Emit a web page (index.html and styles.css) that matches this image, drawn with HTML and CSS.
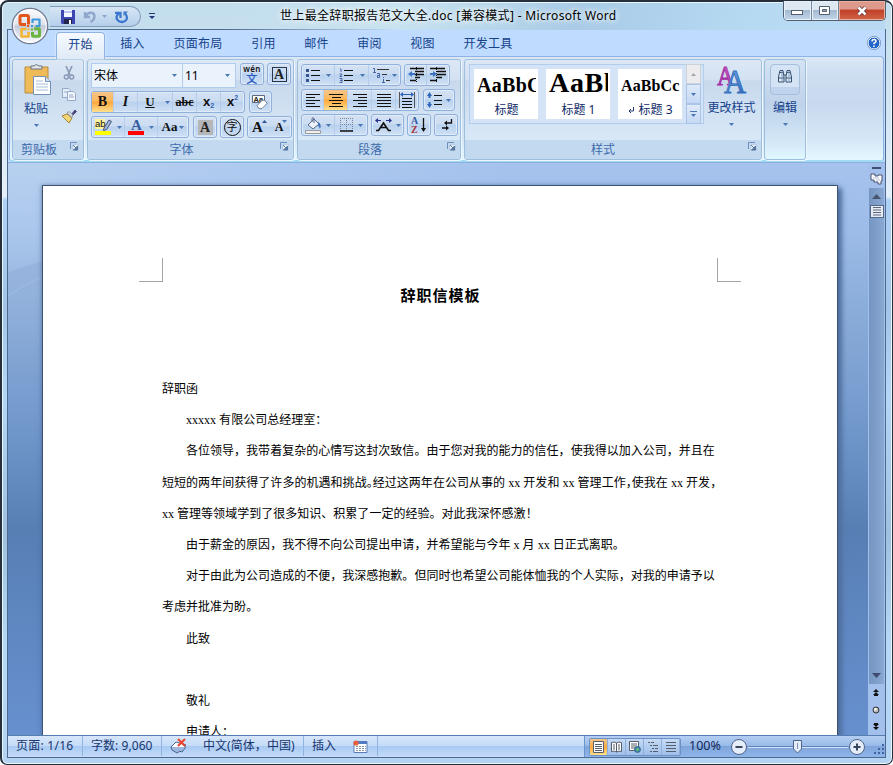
FILE: index.html
```html
<!DOCTYPE html>
<html lang="zh-CN">
<head>
<meta charset="utf-8">
<title>世上最全辞职报告范文大全.doc [兼容模式] - Microsoft Word</title>
<link rel="stylesheet" href="styles.css">
</head>
<body>
<svg class="defs" width="0" height="0">
  <defs>
    <symbol id="car" viewBox="0 0 5 3"><path d="M0 0h5L2.500 3z" fill="#4a78b5"/></symbol>
    <symbol id="launch" viewBox="0 0 9 9"><path d="M.5 7V.5H7" fill="none" stroke="#6b8fbd"/><path d="M3 3h5.500v5.500H3z" fill="#fff" stroke="#9db8d8" stroke-width=".6"/><path d="M3 3l3 3M7.500 4v4h-4z" stroke="#52779f" fill="#52779f"/></symbol>
    <linearGradient id="blu" x1="0" y1="0" x2="1" y2="1"><stop stop-color="#8fc0f5"/><stop offset="1" stop-color="#2457a8"/></linearGradient>
    <linearGradient id="pur" x1="0" y1="0" x2="0" y2="1"><stop stop-color="#e178cd"/><stop offset="1" stop-color="#98279c"/></linearGradient>
    <linearGradient id="orb" x1="0" y1="0" x2="0" y2="1"><stop stop-color="#fdfdff"/><stop offset=".45" stop-color="#dfe3ec"/><stop offset=".5" stop-color="#c3cad8"/><stop offset=".8" stop-color="#e3e8f2"/><stop offset="1" stop-color="#fff"/></linearGradient>
    <linearGradient id="wave" x1="0" y1="0" x2="0" y2="1"><stop stop-color="#8fadd8" stop-opacity=".9"/><stop offset="1" stop-color="#8fadd8" stop-opacity="0"/></linearGradient>
  </defs>
</svg>
<div class="window">
  <header class="titlebar">
    <div class="quick">
      <svg width="16" height="16" viewBox="0 0 16 16"><path d="M1 1h14v14H2l-1-1z" fill="#3d46b0"/><path d="M4 1h8v7H4z" fill="#f5f7ff"/><path d="M4 2h8v2H4z" fill="#b9c5f0"/><path d="M4 10h8v5H4z" fill="#20264e"/><path d="M9 11h2v4H9z" fill="#fff"/></svg>
      <svg width="14" height="14" viewBox="0 0 14 14"><path d="M2 2v5h5M2.500 6.500C5 1.500 11 1.500 11.500 6c0 3-2 5-4 6" fill="none" stroke="#8fa7ca" stroke-width="2.400"/></svg>
      <svg class="qcar" width="5" height="3"><use href="#car" opacity=".5"/></svg>
      <svg width="14" height="14" viewBox="0 0 14 14"><path d="M4.500 3.500C1 5 1 8 2.500 10c2.500 3 7.500 2.500 9-.5 1-2.500 0-4.500-1.500-6M0 2.800h5.500V8" fill="none" stroke="#3d78d0" stroke-width="2.300"/><path d="M8.500 6V1.500H13z" fill="#3d78d0"/></svg>
    </div>
    <svg class="qmore" width="6" height="7" viewBox="0 0 6 7"><path d="M0 .5h6" stroke="#1f3f74"/><path d="M0 3h6L3 6z" fill="#1f3f74"/></svg>
    <h1>世上最全辞职报告范文大全.doc [兼容模式] - Microsoft Word</h1>
    <div class="wbtns">
      <span class="wb"><svg width="13" height="6"><rect x=".5" y=".5" width="11" height="4" fill="#fff" stroke="#53606f"/></svg></span>
      <span class="wb"><svg width="12" height="10"><path d="M.5.5h10v8H.5z" fill="#fff" stroke="#53606f"/><path d="M3.500 3.500h4v2h-4z" fill="#9aabc0" stroke="#53606f"/></svg></span>
      <span class="wb close"><svg width="12" height="10" viewBox="0 0 12 10"><path d="M2.500 1.500l7 7M9.500 1.500l-7 7" stroke="#5a3038" stroke-width="4"/><path d="M2.500 1.500l7 7M9.500 1.500l-7 7" stroke="#fff" stroke-width="2.500"/></svg></span>
    </div>
  </header>
  <div class="orb">
    <svg width="38" height="38" viewBox="0 0 38 38"><circle cx="19" cy="19" r="17.700" fill="url(#orb)" stroke="#737c93" stroke-width="1.300"/><circle cx="19" cy="19" r="16.200" fill="none" stroke="#fff" stroke-opacity=".8" stroke-width="1.200"/><g fill="none" stroke-width="3" stroke-linejoin="round"><path d="M17.500 17.500V10q0-1.500-1.500-1.500H10.500q-1.500 0-1.500 1.500v6q0 1.500 1.500 1.500h4.500" stroke="#e2561a"/><path d="M21.500 16v-3.500h7V19h-4" stroke="#3d99d9" stroke-width="2.200"/><path d="M15.500 22H10.500v7.500h7V25" stroke="#f4b632" stroke-width="2.600"/><path d="M23 21.800h4.500q1 0 1 1v5.500q0 1-1 1h-5q-1 0-1-1V25" stroke="#6db33f"/></g><path d="M16 18h2v2h-2z" fill="#e75a18"/><path d="M20 18h2v2h-2z" fill="#3d99d9"/><path d="M16.500 21.500h2v2h-2z" fill="#f4b632"/><path d="M20 21.500h2v2h-2z" fill="#6db33f"/></svg>
  </div>
  <div class="client">
    <nav class="tabs">
      <span class="tab on">开始</span><span class="tab">插入</span><span class="tab wide">页面布局</span><span class="tab">引用</span><span class="tab">邮件</span><span class="tab">审阅</span><span class="tab">视图</span><span class="tab wide">开发工具</span>
      <svg class="help" width="14" height="14" viewBox="0 0 14 14"><circle cx="7" cy="7" r="6" fill="#2364c8" stroke="#fff"/><circle cx="7" cy="7" r="6.700" fill="none" stroke="#4d73a8" stroke-width=".6"/><path d="M5 5.500Q5 3.500 7 3.500t2 1.800Q9 6.500 7 7.300v1M7 9.500v1.500" fill="none" stroke="#fff" stroke-width="1.500"/></svg>
    </nav>
    <div class="ribbon">
      <section class="group clip">
        <div class="gbody">
          <div class="paste">
            <svg width="28" height="32" viewBox="0 0 28 32"><path d="M1 3h23v26H1z" fill="#efba58" stroke="#b98b3c"/><path d="M7 5V2h3q2-3 5 0h3v3z" fill="#e3e7ec" stroke="#68717d"/><path d="M9.500 12.500h12l5 5v13h-17z" fill="#fff" stroke="#7590b8"/><path d="M21.500 12.500v5h5" fill="#cfdef3" stroke="#7590b8"/><path d="M12 17h7M12 20h12M12 23h12M12 26h12" stroke="#a8bedc"/></svg>
            <span>粘贴</span><svg width="5" height="3"><use href="#car"/></svg>
          </div>
          <div class="mini">
            <svg width="12" height="14" viewBox="0 0 12 14"><path d="M3 0l4 9M9 0L5 9" stroke="#8797b4" stroke-width="1.600"/><circle cx="3.300" cy="11" r="2" fill="none" stroke="#8797b4" stroke-width="1.400"/><circle cx="8.700" cy="11" r="2" fill="none" stroke="#8797b4" stroke-width="1.400"/></svg>
            <svg width="16" height="13" viewBox="0 0 16 13"><path d="M1.500.5h6l2 2v7h-8z" fill="#e7effa" stroke="#94a9ca"/><path d="M6.500 3.500h6l2 2v7h-8z" fill="#f3f7fd" stroke="#94a9ca"/><path d="M3 4h3M8 7h4M8 9h5" stroke="#94a9ca"/></svg>
            <svg width="16" height="15" viewBox="0 0 16 15"><path d="M10 6l4-5 1.500 1.500L11 7z" fill="#504980" stroke="#504980"/><path d="M1 7l5-2 5 4-3 5z" fill="#f3d677" stroke="#a58432"/><path d="M6 4l2-1.500L12 6l-1 2.500z" fill="#dadde8" stroke="#777e90" stroke-width=".7"/></svg>
          </div>
        </div>
        <footer>剪贴板<svg class="launch" width="9" height="9"><use href="#launch"/></svg></footer>
      </section>

      <section class="group font">
        <div class="gbody rows">
          <div class="row r1">
            <div class="combo"><span class="c1">宋体<svg width="5" height="3"><use href="#car"/></svg></span><span class="c2">11<svg width="5" height="3"><use href="#car"/></svg></span></div>
            <div class="box w24 m4"><span class="pin"><i>wén</i><b>文</b></span></div>
            <div class="box w24 m3"><span class="framed">A</span></div>
          </div>
          <div class="row">
            <div class="box">
              <span class="b w22 hot serif bold">B</span><span class="b w24 serif ital">I</span><span class="b w24 serif bold under">U</span><span class="b w11"><svg width="5" height="3"><use href="#car"/></svg></span><span class="b w24 serif strike">abc</span><span class="b w24 sx">x<sub>2</sub></span><span class="b w23 sx">x<sup>2</sup></span>
            </div>
            <div class="box w23 m4"><svg width="17" height="17" viewBox="0 0 17 17"><path d="M.5 1.500h12v7H.5z" fill="#fff" stroke="#5c6c86"/><text x="1.500" y="8" font-family="Liberation Sans" font-size="7.500" font-weight="bold" fill="#222">Aa</text><path d="M5 11.500l5-5q2-1 4 1l1 2-5 5q-2 1-4-1z" fill="#fff" stroke="#70819c"/></svg></div>
          </div>
          <div class="row">
            <div class="box">
              <span class="b w33"><svg width="18" height="18" viewBox="0 0 18 18"><path d="M0 1h10v10H0z" fill="#fbf49a"/><text x="0" y="9" font-family="Liberation Sans" font-size="9.500" fill="#111">ab</text><path d="M9 10l5-8 2.500 1.500-5 8-3 1z" fill="#a4b8d8" stroke="#40557d"/><path d="M0 13h16v4H0z" fill="#ff0"/></svg><svg width="5" height="3"><use href="#car"/></svg></span>
              <span class="b w33"><svg width="17" height="18" viewBox="0 0 17 18"><text x="3" y="12" font-family="Liberation Serif" font-size="15" font-weight="bold" fill="#365f9f">A</text><path d="M0 13h16v4H0z" fill="red"/></svg><svg width="5" height="3"><use href="#car"/></svg></span>
              <span class="b w30 serif bold aa">Aa<svg width="5" height="3"><use href="#car"/></svg></span>
            </div>
            <div class="box w24 m4"><span class="shade">A</span></div>
            <div class="box w24 m3"><span class="ring">字</span></div>
            <div class="box m3"><span class="b w23 serif bold grow">A<svg width="5" height="3" viewBox="0 0 5 3"><path d="M0 3h5L2.500 0z" fill="#2c5599"/></svg></span><span class="b w21 serif bold grow small">A<svg width="5" height="3"><use href="#car"/></svg></span></div>
          </div>
        </div>
        <footer>字体<svg class="launch" width="9" height="9"><use href="#launch"/></svg></footer>
      </section>

      <section class="group para">
        <div class="gbody rows">
          <div class="row">
            <div class="box">
              <span class="b w33"><svg width="14" height="14" viewBox="0 0 14 14"><path d="M5 2.500h9M5 7.500h9M5 12.500h9" stroke="#111"/><path d="M0 1h3v3H0zM0 6h3v3H0zM0 11h3v3H0z" fill="#38558f"/></svg><svg width="5" height="3"><use href="#car"/></svg></span>
              <span class="b w34"><svg width="15" height="15" viewBox="0 0 15 15"><path d="M5 2.500h9M5 7.500h9M5 12.500h9" stroke="#111"/><path d="M1 1h1v3M.5 6H3L1 8.500h2M.5 10.500H3v4H.500M1 12.500h2" fill="none" stroke="#4565a5"/></svg><svg width="5" height="3"><use href="#car"/></svg></span>
              <span class="b w31 tight"><svg width="17" height="16" viewBox="0 0 17 16"><path d="M4 2.500h12M9 7.500h5M13 13.500h4" stroke="#333"/><path d="M0 1.500h1.500V5M0 5.500h3M4 6.500h2.500v4H4.500v-2h2M10.500 12v4M10.500 10v1M9 15.500h3" fill="none" stroke="#4565a5"/></svg><svg width="5" height="3"><use href="#car"/></svg></span>
            </div>
            <div class="box m3"><span class="b w22"><svg width="16" height="16" viewBox="0 0 16 16"><path d="M2 1.500h14M7 4.500h9M7 7.500h9M7 10.500h5M2 13.500h6" stroke="#111" stroke-width="1.300"/><path d="M8.500 0v16" stroke="#111" stroke-dasharray="1 1"/><path d="M0 7l4-3v2h3v2H4v2z" fill="#3e74c5"/></svg></span><span class="b w22"><svg width="16" height="16" viewBox="0 0 16 16"><path d="M0 1.500h15M7 4.500h9M7 7.500h9M7 10.500h5M0 13.500h7" stroke="#111" stroke-width="1.300"/><path d="M6.500 0v16" stroke="#111" stroke-dasharray="1 1"/><path d="M7 7L3 4v2H0v2h3v2z" fill="#3e74c5"/></svg></span></div>
          </div>
          <div class="row">
            <div class="box">
              <span class="b w22"><svg width="14" height="13"><path d="M0 .5h14M0 3.500h9M0 6.500h14M0 9.500h9M0 12.500h14" stroke="#111"/></svg></span>
              <span class="b w24 hot"><svg width="14" height="13"><path d="M0 .5h14M3 3.500h9M0 6.500h14M3 9.500h9M0 12.500h14" stroke="#111"/></svg></span>
              <span class="b w24"><svg width="14" height="13"><path d="M0 .5h14M5 3.500h9M0 6.500h14M5 9.500h9M0 12.500h14" stroke="#111"/></svg></span>
              <span class="b w24"><svg width="14" height="13"><path d="M0 .5h14M0 3.500h14M0 6.500h14M0 9.500h14M0 12.500h14" stroke="#111"/></svg></span>
              <span class="b w22"><svg width="16" height="16" viewBox="0 0 16 16"><path d="M.5 0v16M15.500 0v16" stroke="#555"/><path d="M3 6.500h10M3 9.500h10M3 12.500h10M3 15.500h10" stroke="#111"/><path d="M1 2.500l3-2.500v2h8V0l3 2.500L12 5V3H4v2z" fill="#2d64b8"/></svg></span>
            </div>
            <div class="box m4"><span class="b w30"><svg width="15" height="16" viewBox="0 0 15 16"><path d="M7 3.500h8M7 8.500h8M7 12.500h8" stroke="#111"/><path d="M2.500 0L5 4H3.500v2h-2V4H0zM2.500 16L5 12H3.500v-2h-2v2H0z" fill="#2d64b8"/></svg><svg width="5" height="3"><use href="#car"/></svg></span></div>
          </div>
          <div class="row">
            <div class="box">
              <span class="b w33"><svg width="17" height="17" viewBox="0 0 17 17"><path d="M3 8l6-6 5 5-6 5z" fill="#eef2fa" stroke="#59698a"/><path d="M7 5V1.500q1.500-2 2 0V6" fill="none" stroke="#59698a"/><path d="M13 5q4 2 2 7l-2-4z" fill="#3d6db8"/><path d="M.5 13.500h15v3H.500z" fill="#eee" stroke="#9b9b9b"/></svg><svg width="5" height="3"><use href="#car"/></svg></span>
              <span class="b w32"><svg width="14" height="14" viewBox="0 0 14 14"><path d="M.5 0v13M6.500 0v13M12.500 0v13M0 .5h13M0 6.500h13" stroke="#7084a0" stroke-dasharray="1 1"/><path d="M0 13h13" stroke="#111" stroke-width="1.500"/></svg><svg width="5" height="3"><use href="#car"/></svg></span>
            </div>
            <div class="box m3"><span class="b w31"><svg width="17" height="14" viewBox="0 0 17 14"><path d="M1 12.500h2.500L8.500 5l5 7.500H16M5.500 9.500h6" fill="none" stroke="#111" stroke-width="1.600"/><path d="M0 2.500L3 0v5zM17 2.500L14 0v5zM3 2h3v1H3zM11 2h3v1h-3z" fill="#25348f"/></svg><svg width="5" height="3"><use href="#car"/></svg></span></div>
            <div class="box w24 m2"><svg width="16" height="18" viewBox="0 0 16 18"><text x="0" y="8" font-family="Liberation Serif" font-size="10" font-weight="bold" fill="#315da8">A</text><text x="0" y="17" font-family="Liberation Serif" font-size="10" font-weight="bold" fill="#a3343c">Z</text><path d="M12.500 2v11" stroke="#111" stroke-width="1.300"/><path d="M10 12h5l-2.500 4z" fill="#111"/></svg></div>
            <div class="box w24 m2"><svg width="13" height="14" viewBox="0 0 13 14"><path d="M11.500 1v4H6M2 10h5" fill="none" stroke="#111" stroke-width="1.300"/><path d="M4 5l3-2.500v5zM9 10L6 7.500v5z" fill="#111"/></svg></div>
          </div>
        </div>
        <footer>段落<svg class="launch" width="9" height="9"><use href="#launch"/></svg></footer>
      </section>

      <section class="group styles">
        <div class="gbody">
          <div class="gallery">
            <div class="card"><div class="prev p1">AaBbC</div><span>标题</span></div>
            <div class="card"><div class="prev p2">AaBb</div><span>标题 1</span></div>
            <div class="card"><div class="prev p3">AaBbCc</div><span><svg width="6" height="7" viewBox="0 0 6 7"><path d="M5.500 0v4H1M3 2L1 4l2 2" fill="none" stroke="#0f2a66" stroke-width=".9"/></svg> 标题 3</span></div>
            <div class="spin"><i><svg width="5" height="3" viewBox="0 0 5 3"><path d="M0 3h5L2.500 0z" fill="#a5a5a5"/></svg></i><i><svg width="5" height="3"><use href="#car"/></svg></i><i><svg width="7" height="7" viewBox="0 0 7 7"><path d="M0 .5h7" stroke="#4a78b5"/><path d="M1 3h5L3.500 6z" fill="#4a78b5"/></svg></i></div>
          </div>
          <div class="change">
            <svg width="30" height="30" viewBox="0 0 30 30"><text x="0" y="20" font-family="Liberation Serif" font-size="27" textLength="17" lengthAdjust="spacingAndGlyphs" fill="url(#pur)" stroke="#a12ca6" stroke-width=".9">A</text><text x="7" y="28" font-family="Liberation Serif" font-size="33" textLength="22" lengthAdjust="spacingAndGlyphs" fill="url(#blu)" stroke="#2f6fc0" stroke-width=".9">A</text></svg>
            <span>更改样式</span><svg width="5" height="3"><use href="#car"/></svg>
          </div>
        </div>
        <footer>样式<svg class="launch" width="9" height="9"><use href="#launch"/></svg></footer>
      </section>

      <section class="group edit">
        <div class="find"><svg width="16" height="14" viewBox="0 0 16 14"><path d="M1.500 8L3 1.500h3L7 8v5H1.500zM9 8l1-6.500h3L14.500 8v5H9z" fill="#e4ebf6" stroke="#34506f"/><path d="M3 3.500h3M10 3.500h3M7 6h2M1.500 9H7M9 9h5.500" stroke="#34506f"/><path d="M5 2v11M12 2v11" stroke="#7d9cc4"/></svg></div>
        <span>编辑</span><svg width="5" height="3"><use href="#car"/></svg>
      </section>
    </div>

    <div class="work">
      <div class="desk">
        <svg class="wave" width="60" height="130" viewBox="0 0 60 130"><path d="M0 19L60 0v130H0z" fill="url(#wave)"/><path d="M0 43Q25 25 60 15" fill="none" stroke="#b0c9ea" stroke-opacity=".6"/></svg>
        <article class="page">
          <div class="corners"><i class="cl"></i><i class="cr"></i></div>
          <h2>辞职信模板</h2>
          <p>辞职函</p>
          <p class="ind">xxxxx 有限公司总经理室：</p>
          <p class="ind">各位领导，我带着复杂的心情写这封次致信。由于您对我的能力的信任，使我得以加入公司，并且在</p>
          <p class="over">短短的两年间获得了许多的机遇和挑战<span class="half">。</span>经过这两年在公司从事的 xx 开发和 xx 管理工作<span class="half">，</span>使我在 xx 开发，</p>
          <p>xx 管理等领域学到了很多知识、积累了一定的经验。对此我深怀感激！</p>
          <p class="ind">由于薪金的原因，我不得不向公司提出申请，并希望能与今年 x 月 xx 日正式离职。</p>
          <p class="ind">对于由此为公司造成的不便，我深感抱歉。但同时也希望公司能体恤我的个人实际，对我的申请予以</p>
          <p>考虑并批准为盼。</p>
          <p class="ind">此致</p>
          <p></p>
          <p class="ind">敬礼</p>
          <p class="ind">申请人：</p>
        </article>
      </div>
      <aside class="scroll">
        <div class="split"></div>
        <svg class="ruler" width="13" height="12" viewBox="0 0 13 12"><path d="M1 1h4v2h3V2h4v6h-1v3H8V9H4V7H1z" fill="#fff" stroke="#47536e"/><path d="M3 5h6M6 7h4" stroke="#b7c3d8"/></svg>
        <div class="track">
          <svg width="9" height="5"><path d="M0 5h9L4.500 0z" fill="#48546d"/></svg>
          <div class="thumb"><svg width="8" height="9"><path d="M0 .5h8M0 3h8M0 5.500h8M0 8h8" stroke="#5c6a81"/></svg></div>
          <svg class="down" width="9" height="5"><path d="M0 0h9L4.500 5z" fill="#3f4b70"/></svg>
        </div>
        <div class="nav">
          <svg width="6" height="7" viewBox="0 0 6 7"><path d="M0 3l3-3 3 3zM0 6l3-3 3 3zM1 6h4v1H1z" fill="#111"/></svg>
          <svg width="8" height="8"><circle cx="4" cy="4" r="3" fill="#bbb" stroke="#333"/><circle cx="3.300" cy="3.300" r="1.200" fill="#fff"/></svg>
          <svg width="6" height="7" viewBox="0 0 6 7"><path d="M0 4l3 3 3-3zM0 1l3 3 3-3zM1 0h4v1H1z" fill="#111"/></svg>
        </div>
      </aside>
    </div>

    <div class="status">
      <span class="s s1">页面: 1/16</span><span class="s s2">字数: 9,060</span>
      <span class="s0"><svg width="18" height="16" viewBox="0 0 18 16"><path d="M1 9l5-5 10 3-5 6q-2-2-4 1z" fill="#fff" stroke="#4b6593"/><path d="M1 9l1 3 5 3q3-3 5-1l4-5" fill="#9fb8df" stroke="#4b6593"/><path d="M8 1l7 7M15 1L8 8" stroke="#e8442d" stroke-width="2"/></svg></span>
      <span class="s s3">中文(简体，中国)</span><span class="s s4">插入</span>
      <span class="s s5"><svg width="15" height="13" viewBox="0 0 15 13"><path d="M1 1.500h13v11H1z" fill="#fff" stroke="#5b7db5"/><path d="M1 1h13v3H1z" fill="#507bc3"/><path d="M3 6.500h10M3 8.500h10M3 10.500h10" stroke="#8494aa" stroke-dasharray="2 1"/><circle cx="3" cy="3" r="2.600" fill="#e6603c"/></svg></span>
      <div class="right">
        <div class="views">
          <span class="v hot"><svg width="12" height="12"><path d="M.5.5h10v11H.5z" fill="#fff" stroke="#565e6c"/><path d="M2 3.500h7M2 5.500h7M2 7.500h7M2 9.500h7" stroke="#565e6c"/></svg></span>
          <span class="v"><svg width="12" height="12"><path d="M.5 1.500q3-1 5 .5v9q-2-1.500-5-.5zM10.500 1.500q-3-1-5 .5v9q2-1.500 5-.5z" fill="#fff" stroke="#565e6c"/><path d="M2 4h2M2 6h2M2 8h2M7 4h2M7 6h2M7 8h2" stroke="#565e6c"/></svg></span>
          <span class="v"><svg width="12" height="12"><path d="M.5.5h9v9h-9z" fill="#fff" stroke="#565e6c"/><path d="M2 3h6M2 5h6M2 7h4" stroke="#565e6c"/><circle cx="8.500" cy="8.500" r="3" fill="#3a88b0" stroke="#28577f" stroke-width=".7"/><path d="M7 8l2-1 1 2-2 1z" fill="#7cc35b"/></svg></span>
          <span class="v"><svg width="10" height="10"><path d="M0 .5h6M2 3.500h8M4 6.500h6M2 9.500h8" stroke="#565e6c" stroke-dasharray="2 1 6"/></svg></span>
          <span class="v"><svg width="10" height="10"><path d="M0 .5h10M0 3.500h10M0 6.500h10M0 9.500h10" stroke="#565e6c"/></svg></span>
        </div>
        <span class="pct">100%</span>
        <svg class="zoom" width="136" height="18" viewBox="0 0 136 18"><g stroke="#4e6389"><circle cx="9" cy="9" r="7.500" fill="#e5edfa"/><circle cx="127" cy="9" r="7.500" fill="#e5edfa"/></g><path d="M5.500 9h7M123.500 9h7M127 5.500v7" stroke="#39465c" stroke-width="2"/><path d="M18 9.500h100" stroke="#d4e2f8"/><path d="M18 8.500h100" stroke="#5f83ba"/><path d="M63.500 2.500h8V11l-4 4-4-4z" fill="#e6eefb" stroke="#4e6389"/><path d="M67.500 5v6" stroke="#8295b5"/></svg>
        <svg class="grip" width="12" height="12"><path d="M9 1h2v2H9zM5 5h2v2H5zM9 5h2v2H9zM1 9h2v2H1zM5 9h2v2H5zM9 9h2v2H9z" fill="#41639f"/></svg>
      </div>
    </div>
  </div>
</div>
</body>
</html>
```
FILE: styles.css
```css
* { box-sizing: border-box; }
body { margin: 0; background: #fff; overflow: hidden; font: 12px/16px "Noto Sans", "Noto Sans CJK SC", sans-serif; color: #15428b; }
svg { display: block; flex: none; }
i { font-style: normal; }
.defs { position: absolute; }
.window { position: relative; width: 893px; height: 765px; border: 1px solid #26303c; border-width: 2px 1px 1px 2px; border-radius: 8px 8px 7px 7px; background: linear-gradient(#c2ddec 0, #d3e5f4 15%, #e4f0fb 25.500%, #aed2f6 26%, #a3c4e6 40%, #b4d6f7 52%, #9fc0df 70%, #b7d9f8 85%, #b4d3f2 100%); box-shadow: inset 0 0 0 1px #e9f6ff; padding: 0 7px 7px 5px; display: flex; flex-direction: column; }

.titlebar { height: 27px; flex: none; display: flex; position: relative; background: linear-gradient(100deg, transparent 0 25%, #c7e2f0 45%, #a9cbe6 65%, #b7daf3 85%, #b9d9f3); margin: 1px 0 -1px; }
.quick { width: 91px; height: 21px; margin: 3px 0 0 43px; border: 1px solid #7f9bb9; border-left: 0; border-radius: 0 11px 11px 0; display: flex; align-items: center; padding-left: 10px; gap: 7px; background: linear-gradient(#d7e6f5, #b5cfea); }
.quick svg:nth-child(4) { margin-left: 1px; }
.quick .qcar { margin-left: -2px; }
.qmore { margin: 10px 0 0 8px; }
h1 { position: absolute; left: 273px; top: 4px; margin: 0; font: 12px/17px "Noto Sans", "Noto Sans CJK SC", sans-serif; letter-spacing: .33px; color: #000; white-space: nowrap; text-shadow: 0 0 6px #fff, 0 0 6px #fff; }
.wbtns { margin-left: auto; margin-top: -2px; margin-right: -1px; height: 20px; display: flex; border: 1px solid #52606f; border-top: 0; border-radius: 0 0 5px 5px; overflow: hidden; }
.wb { width: 28px; display: flex; justify-content: center; align-items: center; border-right: 1px solid #75869a; background: linear-gradient(#dee8f3 0 45%, #a4b9d0 50%, #c3d7eb); box-shadow: inset 0 0 0 1px #e6f1fb; }
.wb:first-child svg { margin-top: 5px; }
.wb:nth-child(2) { width: 27px; }
.close { width: 46px; border: 0; background: linear-gradient(#dd9a8c 0 40%, #c1412a 50%, #d0664a); box-shadow: inset 0 0 0 1px #ecae9f; }
.orb { position: absolute; left: 9px; top: 5px; z-index: 3; }

.client { width: 879px; height: 729px; border: 1px solid #4d6a8e; display: flex; flex-direction: column; background: #bfdbff; }
.tabs { height: 27px; flex: none; padding: 2px 0 0 48px; display: flex; gap: 1px; position: relative; }
.tab { width: 52px; text-align: center; line-height: 24px; letter-spacing: .25px; height: 26px; color: #15428b; padding-left: 1px; }
.tab.on { width: 49px; padding: 0; border: 1px solid #8db2e3; border-bottom: 0; border-radius: 4px 4px 0 0; background: linear-gradient(#f6faff, #dfeaf7); height: 27px; z-index: 2; line-height: 23px; box-shadow: 0 0 2px #fff; }
.tab.wide { width: 77px; }
.help { position: absolute; left: 859px; top: 6px; }

.ribbon { height: 106px; flex: none; margin: -1px 1px 0 1px; border: 1px solid #8db2e3; border-bottom: 2px solid #9fdcf3; border-radius: 4px; background: linear-gradient(#dbe7f5 0, #cfdff2 15%, #c8d9ee 45%, #d5e7f7 80%, #e5f7ff); padding: 2px; display: flex; gap: 3px; align-items: flex-start; }
.group { height: 101px; border: 1px solid #9dbfdb; border-radius: 3px; background: linear-gradient(#dde8f5 0, #d3e1f2 20%, #c8d9ed 21%, #d8e8f7 80%); box-shadow: 1px 1px 0 #eef7ff; display: flex; flex-direction: column; overflow: hidden; flex: none; }
.gbody { height: 80px; display: flex; }
.group footer { height: 19px; background: #c2d9f0; color: #3e6aaa; line-height: 20px; text-align: center; padding-right: 18px; position: relative; }
.launch { position: absolute; right: 4px; top: 2px; }
.clip { width: 72px; }
.clip footer { padding-right: 18px; }
.font { width: 207px; }
.para { width: 164px; }
.styles { width: 298px; }
.styles footer { padding-right: 20px; }
.edit { width: 42px; margin-left: -1px; align-items: center; background: linear-gradient(#d5e3f3, #bed2ea 45%, #d5e9f8 85%, #e0f8ff); padding-top: 4px; line-height: 18px; }
.edit > span { margin: 4px 0 6px; }
.find { width: 30px; height: 31px; border: 1px solid #a3bfdd; border-radius: 4px; background: linear-gradient(#d5e4f5 0 75%, #bfd3ec 76%); display: flex; justify-content: center; padding-top: 4px; }
.paste { width: 44px; display: flex; flex-direction: column; align-items: center; padding: 4px 0 0 2px; }
.paste > svg:first-child { margin-left: 3px; }
.paste span { margin: 4px 0 6px; line-height: 18px; }
.mini { display: flex; flex-direction: column; align-items: center; gap: 8px; padding: 6px 0 0 4px; }

.rows { flex-direction: column; gap: 3px; padding: 4px 0 0 3px; }
.row { height: 22px; display: flex; flex: none; }
.font .rows { padding-top: 3px; }
.font .r1 { height: 25px; }
.font .row.r1 .box { height: 22px; }
.box { height: 22px; border: 1px solid #8fb0db; border-radius: 3px; background: linear-gradient(#d3e1f3 0, #cbdcf1 45%, #b9d1ee 50%, #cee0f5); box-shadow: inset 0 0 0 1px #dfebf8; display: flex; align-items: center; justify-content: center; flex: none; }
.b { height: 20px; display: flex; align-items: center; justify-content: center; gap: 4px; border-right: 1px solid #b5cdea; color: #111; white-space: nowrap; }
.b:last-child { border-right: 0; }
.w11 { width: 11px; } .w21 { width: 20px; } .w22 { width: 22px; } .w23 { width: 23px; } .w24 { width: 24px; } .w30 { width: 30px; } .w31 { width: 31px; } .w32 { width: 32px; } .w33 { width: 33px; } .w34 { width: 34px; }
.m2 { margin-left: 3px; } .m3 { margin-left: 3px; } .m4 { margin-left: 4px; }
.para .row:first-child .b:first-child, .para .row:first-child .w34 { gap: 6px; }
.b.tight { gap: 2px; }
.hot { background: linear-gradient(#f6c58a 0, #fbb95a 45%, #fda63b 50%, #ffe08d); }
.serif { font-family: "Liberation Serif", serif; }
.bold { font-weight: bold; font-size: 14px; }
.ital { font-style: italic; font-size: 14px; font-weight: bold; }
.under { text-decoration: underline; border-right: 0; font-size: 13px; }
.strike { font-size: 12px; font-weight: bold; text-decoration: line-through; }
.sx { font: bold 13px/16px "Liberation Sans", sans-serif; gap: 0; }
.sx sub, .sx sup { font-size: 7px; color: #2f5fae; line-height: 8px; }
.sx sub { padding-top: 8px; } .sx sup { padding-bottom: 9px; }
.b.aa { gap: 2px; font-size: 13px; }
.combo { display: flex; border: 1px solid #b0cdf0; background: #eaf2fb; color: #000; height: 25px; line-height: 23px; }
.combo span { display: flex; align-items: center; justify-content: space-between; padding: 0 5px 0 2px; }
.c1 { width: 91px; border-right: 1px solid #b0cdf0; }
.c2 { width: 52px; font-size: 12px; }
.pin { display: flex; flex-direction: column; align-items: center; font-size: 8px; line-height: 8px; color: #111; font-weight: 600; letter-spacing: .3px; }
.pin b { font-size: 11px; line-height: 11px; color: #2458bd; font-weight: 500; }
.framed { border: 1px solid #26364d; width: 15px; height: 15px; font: bold 14px/14px "Liberation Serif", serif; text-align: center; color: #222; }
.shade { background: #b4b6b8; width: 15px; height: 15px; font: bold 14px/15px "Liberation Serif", serif; text-align: center; color: #222; }
.ring { border: 1px solid #111; border-radius: 50%; width: 17px; height: 17px; line-height: 14px; font-size: 11px; text-align: center; color: #111; }
.grow { font-size: 15px; gap: 0; border-right: 0; }
.grow svg { margin-bottom: 11px; margin-left: -1px; }
.small { font-size: 12px; }

.gallery { width: 235px; height: 60px; margin: 4px 0 0 4px; border: 1px solid #b3cdec; background: #d4e4f6; display: flex; gap: 8px; padding: 4px 0 0 4px; }
.card { width: 64px; height: 50px; background: #fff; overflow: hidden; text-align: center; color: #0f2a66; flex: none; padding: 0 2px 0 3px; }
.card span { display: flex; justify-content: center; align-items: center; gap: 1px; line-height: 16px; white-space: pre; }
.prev { height: 33px; overflow: hidden; color: #000; font-family: "Liberation Serif", serif; font-weight: bold; text-align: left; white-space: nowrap; line-height: 33px; }
.p1 { font-size: 20px; letter-spacing: .3px; }
.p2 { font-size: 28px; line-height: 28px; letter-spacing: .7px; }
.p3 { font-size: 16px; letter-spacing: .1px; }
.spin { margin: -5px -1px -1px -4px; width: 15px; display: flex; flex-direction: column; }
.spin i { height: 20px; border: 1px solid #a9c4e6; display: flex; justify-content: center; align-items: center; background: linear-gradient(#dfeafa, #c5d9f4); }
.spin i:first-child { background: #ececee; border-color: #ccd2da; }
.change { width: 55px; display: flex; flex-direction: column; align-items: center; padding-top: 5px; white-space: nowrap; }
.change span { margin: 4px 0 6px; line-height: 18px; }

.work { flex: 1; min-height: 0; display: flex; background: radial-gradient(ellipse 500px 180px at 0 0, rgba(200, 222, 242, .5), transparent), linear-gradient(#a6c3ee 0, #9dbce8 12%, #8caeda 24%, #7399cc 45%, #587fb4 64%, #6790cf 100%); border-top: 1px solid #8eb0dc; }
.desk { position: relative; flex: 1; overflow: hidden; padding: 22px 0 0 34px; }
.wave { position: absolute; left: 0; top: 90px; opacity: .7; }
.page { position: relative; width: 796px; height: 560px; background: #fff; border: 1px solid #3d5270; box-shadow: 4px 3px 5px #4e6e9d, -1px 0 4px rgba(70, 100, 150, .5); padding: 72px 0 0 119px; color: #000; font: 12px/31.200px "Liberation Serif", "Noto Sans CJK SC", serif; }
.corners { display: flex; justify-content: space-between; width: 602px; margin-left: -23px; }
.corners i { width: 24px; height: 24px; border: 1px solid #a5a5a5; }
.corners .cl { border-width: 0 1px 1px 0; }
.corners .cr { border-width: 0 0 1px 1px; }
.page h2 { margin: 0 0 64px 1px; width: 555px; text-align: center; font: bold 15px/28px "Liberation Serif", "Noto Sans CJK SC", serif; letter-spacing: 1px; }
.page p { margin: 0; height: 31.200px; white-space: nowrap; width: 560px; letter-spacing: .02px; }
.page .ind { padding-left: 24px; }
.page .over { letter-spacing: .04px; }
.page .half { letter-spacing: -6px; }

.scroll { width: 17px; background: #a3c0ec; display: flex; flex-direction: column; align-items: center; flex: none; }
.split { width: 9px; height: 2px; margin-top: 4px; background: #3d4f75; flex: none; }
.ruler { margin: 4px 0 3px; }
.track { width: 15px; flex: 1; background: linear-gradient(90deg, #7595c2, #89a8d2); display: flex; flex-direction: column; align-items: center; padding-top: 6px; }
.thumb { width: 14px; height: 13px; margin-top: 6px; border: 1px solid #53688b; background: #e6eaf2; display: flex; align-items: center; justify-content: center; }
.down { margin: auto 0 6px; }
.nav { height: 51px; display: flex; flex-direction: column; align-items: center; justify-content: space-between; padding: 5px 2px 5px 0; }

.status { height: 22px; flex: none; display: flex; border-top: 1px solid #567db1; background: linear-gradient(#d7e6fa 0, #c6dcf8 45%, #a9caf3 50%, #c5dcfa); color: #17366f; }
.s, .s0 { display: flex; align-items: center; height: 20px; border-right: 1px solid #91b3df; white-space: nowrap; flex: none; font-size: 12px; letter-spacing: .05px; }
.s0 { border: 0; width: 34px; justify-content: center; }
.s1 { width: 75px; padding-left: 8px; letter-spacing: .25px; }
.s2 { width: 79px; padding-left: 8px; }
.s3 { width: 108px; padding-left: 7px; }
.s4 { width: 41px; padding-left: 8px; border: 0; }
.s5 { width: 33px; padding-left: 8px; }
.right { margin-left: auto; width: 301px; display: flex; align-items: center; border-left: 1px solid #6c93ca; background: linear-gradient(#b4cef2 0, #9abbe9 45%, #7fa5da 50%, #8fb5ea); padding-left: 4px; }
.views { display: flex; border: 1px solid #6d91c6; border-radius: 2px; height: 18px; }
.v { width: 18px; display: flex; align-items: center; justify-content: center; background: linear-gradient(#c6dbf6, #9fbfe9); border-right: 1px solid #8eafdc; }
.v.hot { background: linear-gradient(#efc58d, #fba83e 50%, #ffe18f); }
.pct { margin-left: 8px; width: 42px; font-size: 12.500px; color: #11285c; line-height: 18px; margin-top: -1px; }
.zoom { margin-left: 1px; }
.grip { margin: 5px 0 0 7px; }
```
